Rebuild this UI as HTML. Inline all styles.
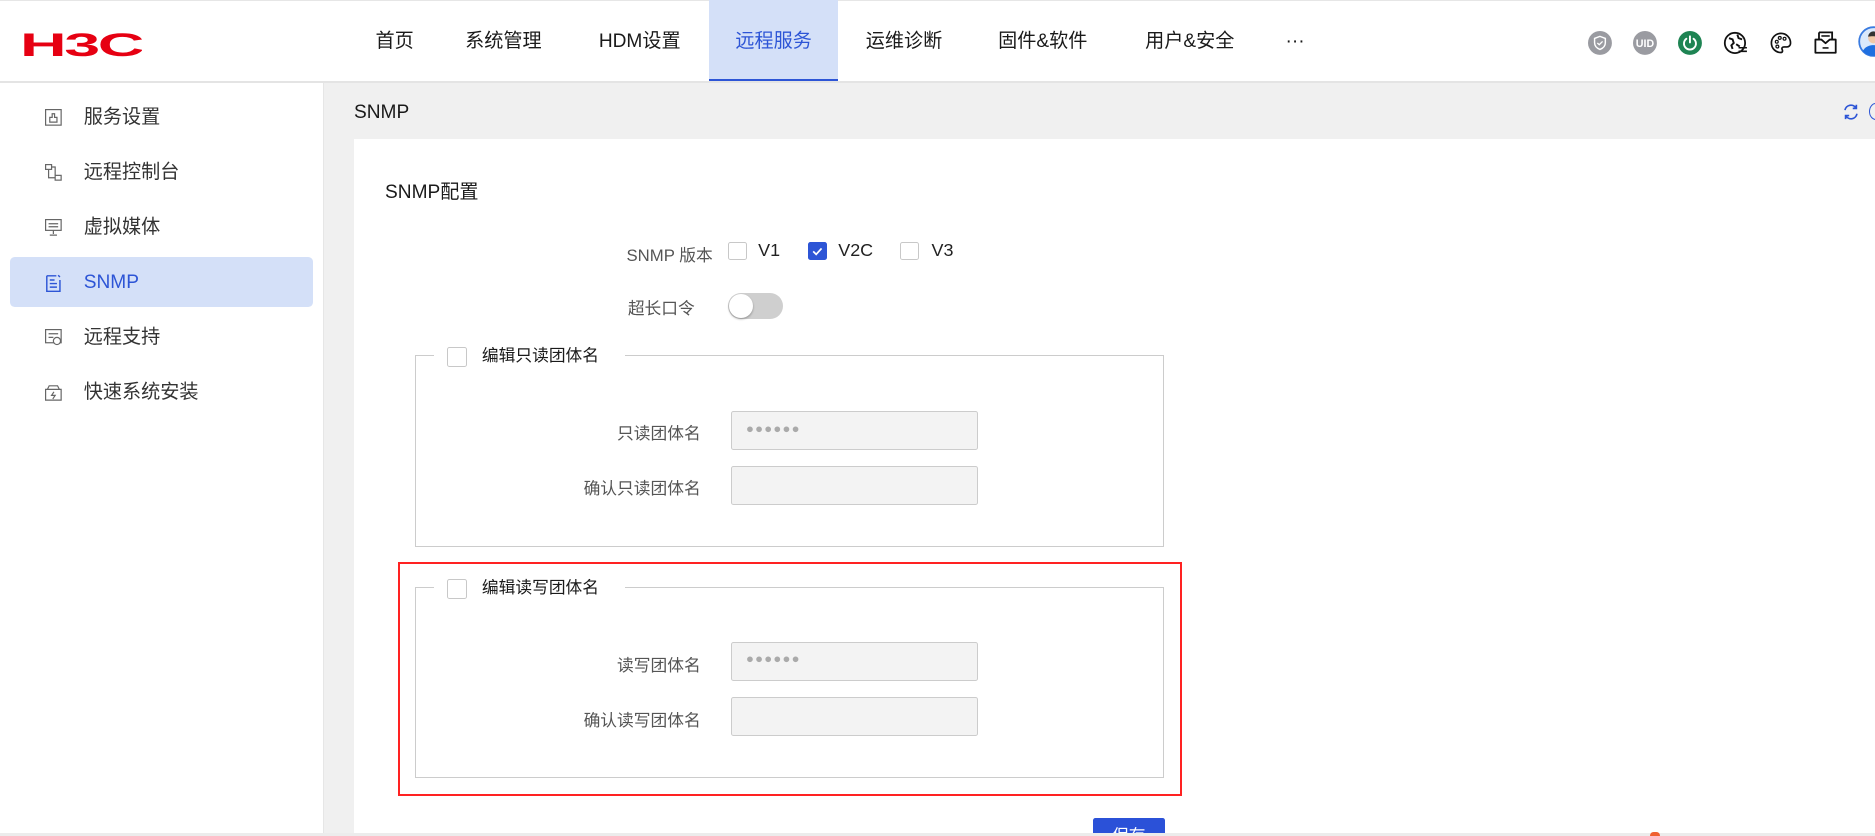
<!DOCTYPE html>
<html><head><meta charset="utf-8">
<style>
html,body{margin:0;padding:0;overflow:hidden;background:#fff}
body{width:1875px;height:836px}
#w{position:absolute;left:0;top:0;width:1568px;height:699px;zoom:1.19579;font-family:"Liberation Sans","Noto Sans CJK SC",sans-serif;color:#222;overflow:hidden}
.a{position:absolute}
.nav{position:absolute;top:0;height:68px;line-height:70px;font-size:16px;color:#1a1a1a;text-align:center}
.si{position:absolute;left:0;width:270px;height:42px;line-height:42px;font-size:16px;color:#333}
.si span{position:absolute;left:70px}
.si svg{position:absolute;left:38px;top:13px}
.lbl{position:absolute;font-size:14px;color:#555;text-align:right;width:200px}
.cb{position:absolute;width:14px;height:14px;border:1px solid #c8c8c8;border-radius:2px;background:#fff}
.inp{position:absolute;left:611px;width:205px;height:31px;border:1px solid #ccc;border-radius:2px;background:#f3f3f3}
.fs{position:absolute;left:347px;width:625px;border:1px solid #ccc}
.lg{position:absolute;background:#fff;font-size:14px;color:#1a1a1a;padding:0 10px}
</style></head><body><div id="w">
<div class="a" style="left:0;top:0;width:1568px;height:1px;background:#e6e6e6"></div>
<div class="a" style="left:0;top:68px;width:1568px;height:1px;background:#e4e4e4"></div>
<svg class="a" style="left:17px;top:22px" width="102" height="28"><text x="0" y="25" font-family="Liberation Sans" font-weight="bold" font-size="27" fill="#e60012" transform="scale(2.0,1)" letter-spacing="-1">H3C</text></svg>
<div class="nav" style="left:300px;width:60px">首页</div>
<div class="nav" style="left:378px;width:86px">系统管理</div>
<div class="nav" style="left:488px;width:94px">HDM设置</div>
<div class="nav" style="left:593px;width:108px;background:#d4e0f8;color:#2d55d6;height:66px;border-bottom:2px solid #2d55d6">远程服务</div>
<div class="nav" style="left:713px;width:86px">运维诊断</div>
<div class="nav" style="left:822px;width:100px">固件&amp;软件</div>
<div class="nav" style="left:945px;width:100px">用户&amp;安全</div>
<div class="nav" style="left:1070px;width:26px">···</div>
<svg class="a" style="left:1328px;top:26px" width="20" height="20"><circle cx="10" cy="10" r="10" fill="#9a9ba1"/><path d="M10 4.5l4.5 1.7v3.6c0 2.8-2 4.6-4.5 5.6-2.5-1-4.5-2.8-4.5-5.6V6.2z" fill="none" stroke="#fff" stroke-width="1.2"/><path d="M7.8 10l1.6 1.5 2.8-2.8" fill="none" stroke="#fff" stroke-width="1.1"/></svg>
<svg class="a" style="left:1366px;top:26px" width="20" height="20"><circle cx="10" cy="10" r="10" fill="#9a9ba1"/><text x="10" y="13.5" text-anchor="middle" font-family="Liberation Sans" font-weight="bold" font-size="9" fill="#fff">UID</text></svg>
<svg class="a" style="left:1403px;top:26px" width="20" height="20"><circle cx="10" cy="10" r="10" fill="#1e8453"/><path d="M7 6.5a5 5 0 1 0 6 0" fill="none" stroke="#fff" stroke-width="1.6" stroke-linecap="round"/><path d="M10 4.5v5" stroke="#fff" stroke-width="1.6" stroke-linecap="round"/></svg>
<svg class="a" style="left:1441px;top:26px" width="22" height="20"><circle cx="10" cy="10" r="8.5" fill="none" stroke="#111" stroke-width="1.5"/><path d="M5 6l3 1 1 3-2 2 1 3M12 3l1 3 3 1M11 11l3 2" fill="none" stroke="#111" stroke-width="1.6"/><path d="M13 14h7M13 17h7" stroke="#111" stroke-width="1.3"/></svg>
<svg class="a" style="left:1479px;top:26px" width="20" height="20"><path d="M10 2a8 8 0 1 0 0 16c1.5 0 1.5-1.5 1-2.5-.6-1.2.3-2.2 1.5-2.2H15a3 3 0 0 0 3-3A8 8 0 0 0 10 2z" fill="none" stroke="#111" stroke-width="1.4"/><circle cx="6.5" cy="9" r="1.2" fill="none" stroke="#111"/><circle cx="9" cy="5.8" r="1.2" fill="none" stroke="#111"/><circle cx="13" cy="6.5" r="1.2" fill="none" stroke="#111"/><circle cx="7" cy="13" r="1.2" fill="none" stroke="#111"/></svg>
<svg class="a" style="left:1516px;top:25px" width="21" height="22"><path d="M5 2h11v6M5 2v6" fill="none" stroke="#111" stroke-width="1.5"/><path d="M7 5h7" stroke="#111" stroke-width="1.3"/><path d="M2 8h5l3.5 3 3.5-3h5v11H2z" fill="none" stroke="#111" stroke-width="1.5" stroke-linejoin="round"/><path d="M8 15h5" stroke="#111" stroke-width="1.3"/></svg>
<svg class="a" style="left:1554px;top:22px" width="24" height="26"><circle cx="13" cy="13" r="12" fill="#dbe9fb" stroke="#3a7be0" stroke-width="1.5"/><circle cx="13" cy="10" r="4.5" fill="#f2c9a8"/><path d="M8.5 9a4.5 4.5 0 0 1 9 0c-2 0-5-1-9 0z" fill="#333"/><path d="M4 21c2-4 6-5 9-5s7 1 9 5c-2 2.5-5.5 4-9 4s-7-1.5-9-4z" fill="#1f6fe0"/></svg>
<div class="a" style="left:270px;top:69px;width:1px;height:630px;background:#e6e6e6"></div>
<div class="si" style="top:78px"><svg width="14" height="14"><rect x=".5" y=".5" width="13" height="13" fill="none" stroke="#666"/><path d="M4 11V7h2V4h2v3h2v4z" fill="none" stroke="#666"/></svg><span>服务设置</span></div>
<div class="si" style="top:124px"><svg width="14" height="14"><rect x=".5" y=".5" width="5" height="4" fill="none" stroke="#666"/><rect x="8.5" y="9.5" width="5" height="4" fill="none" stroke="#666"/><path d="M3 4.5v7h5.5M5.5 2.5h3v7" fill="none" stroke="#666"/></svg><span>远程控制台</span></div>
<div class="si" style="top:170px"><svg width="14" height="14"><rect x=".5" y=".5" width="13" height="9" fill="none" stroke="#666"/><path d="M3 4h8M3 6.5h8M7 9.5v3M4 13.5h6" stroke="#666"/></svg><span>虚拟媒体</span></div>
<div class="a" style="left:8px;top:215px;width:254px;height:42px;background:#d4e0f8;border-radius:4px"></div>
<div class="si" style="top:216px;color:#2d55d6"><svg width="14" height="16"><path d="M1.5 1.5h8M1.5 1.5v13h11V5" fill="none" stroke="#2d55d6" stroke-width="1.2"/><path d="M4 5h4M4 8h6M4 11h6M11 1l1.5 1.5" stroke="#2d55d6" stroke-width="1.2"/></svg><span>SNMP</span></div>
<div class="si" style="top:262px"><svg width="14" height="14"><rect x=".5" y=".5" width="13" height="11" fill="none" stroke="#666"/><path d="M3 4h8M3 7h4" stroke="#666"/><circle cx="10" cy="10" r="3" fill="#fff" stroke="#666"/></svg><span>远程支持</span></div>
<div class="si" style="top:308px"><svg width="14" height="14"><path d="M.5 4.5h13v9H.5zM2 4.5l1.5-3h7l1.5 3" fill="none" stroke="#666"/><path d="M7.5 6.5l-2 3h3l-2 3" fill="none" stroke="#666"/></svg><span>快速系统安装</span></div>
<div class="a" style="left:271px;top:69px;width:1297px;height:630px;background:#f0f0f0"></div>
<div class="a" style="left:296px;top:85px;font-size:16px;color:#1a1a1a">SNMP</div>
<svg class="a" style="left:1540px;top:86px" width="15" height="15"><path d="M2.5 6a5 5 0 0 1 9.2-1.8M12.5 9a5 5 0 0 1-9.2 1.8" fill="none" stroke="#2d55d6" stroke-width="1.4"/><path d="M12 1.5v3h-3M3 13.5v-3h3" fill="none" stroke="#2d55d6" stroke-width="1.4"/></svg>
<div class="a" style="left:1563px;top:86px;width:10px;height:13px;border:1.5px solid #2d55d6;border-radius:50%"></div>
<div class="a" style="left:296px;top:116px;width:1272px;height:581px;background:#fff"></div>
<div class="a" style="left:322px;top:147px;font-size:16px;color:#1a1a1a">SNMP配置</div>
<div class="lbl" style="left:396px;top:202px">SNMP 版本</div>
<div class="cb" style="left:609px;top:202px"></div><div class="a" style="left:634px;top:201px;font-size:15px">V1</div>
<div class="cb" style="left:676px;top:202px;background:#2d55d6;border-color:#2d55d6"><svg width="14" height="14" style="position:absolute;left:0;top:0"><path d="M3.5 7l2.5 2.5 4.5-5" fill="none" stroke="#fff" stroke-width="1.4"/></svg></div><div class="a" style="left:701px;top:201px;font-size:15px">V2C</div>
<div class="cb" style="left:753px;top:202px"></div><div class="a" style="left:779px;top:201px;font-size:15px">V3</div>
<div class="lbl" style="left:381px;top:247px">超长口令</div>
<div class="a" style="left:609px;top:245px;width:46px;height:22px;border-radius:11px;background:#cfcfcf"></div>
<div class="a" style="left:610px;top:246px;width:20px;height:20px;border-radius:50%;background:#fff;box-shadow:0 1px 2px rgba(0,0,0,.3)"></div>
<div class="fs" style="top:297px;height:159px"></div>
<div class="lg" style="left:363px;top:288px;height:20px;line-height:20px;width:140px"></div>
<div class="a" style="left:403px;top:288px;font-size:14px;line-height:20px;color:#1a1a1a">编辑只读团体名</div>
<div class="cb" style="left:374px;top:290px;width:15px;height:15px"></div>
<div class="lbl" style="left:386px;top:351px">只读团体名</div>
<div class="inp" style="top:344px"><span style="position:absolute;left:12px;top:7px;font-size:11px;color:#aaa;letter-spacing:1px">●●●●●●</span></div>
<div class="lbl" style="left:386px;top:397px">确认只读团体名</div>
<div class="inp" style="top:390px"></div>
<div class="a" style="left:333px;top:470px;width:652px;height:192px;border:2px solid #f22"></div>
<div class="fs" style="top:491px;height:158px"></div>
<div class="lg" style="left:363px;top:482px;height:20px;line-height:20px;width:140px"></div>
<div class="a" style="left:403px;top:482px;font-size:14px;line-height:20px;color:#1a1a1a">编辑读写团体名</div>
<div class="cb" style="left:374px;top:484px;width:15px;height:15px"></div>
<div class="lbl" style="left:386px;top:545px">读写团体名</div>
<div class="inp" style="top:537px"><span style="position:absolute;left:12px;top:7px;font-size:11px;color:#aaa;letter-spacing:1px">●●●●●●</span></div>
<div class="lbl" style="left:386px;top:591px">确认读写团体名</div>
<div class="inp" style="top:583px"></div>
<div class="a" style="left:914px;top:684px;width:60px;height:30px;background:#2b51d8;border-radius:2px;color:#fff;font-size:14px;text-align:center;line-height:30px">保存</div>
<div class="a" style="left:0;top:697px;width:1568px;height:2px;background:#ececec"></div>
<div class="a" style="left:1380px;top:696px;width:8px;height:3px;background:#f06030;border-radius:3px 3px 0 0"></div>
</div></body></html>
